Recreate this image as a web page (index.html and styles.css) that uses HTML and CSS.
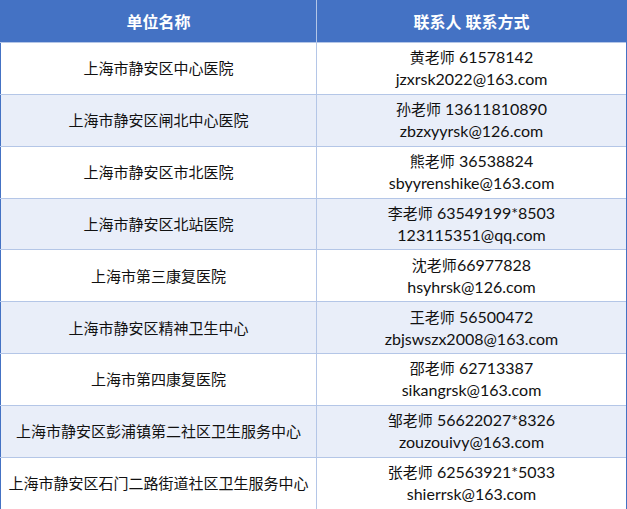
FILE: index.html
```html
<!DOCTYPE html>
<html lang="zh">
<head>
<meta charset="utf-8">
<link rel="stylesheet" href="styles.css">
</head>
<body>
<table class="contacts">
  <thead>
    <tr><th class="col-name">单位名称</th><th class="col-contact">联系人 联系方式</th></tr>
  </thead>
  <tbody>
    <tr><td>上海市静安区中心医院</td><td>黄老师<span class="lt"> 61578142</span><br><span class="lt">jzxrsk2022@163.com</span></td></tr>
    <tr class="alt"><td>上海市静安区闸北中心医院</td><td>孙老师<span class="lt"> 13611810890</span><br><span class="lt">zbzxyyrsk@126.com</span></td></tr>
    <tr><td>上海市静安区市北医院</td><td>熊老师<span class="lt"> 36538824</span><br><span class="lt">sbyyrenshike@163.com</span></td></tr>
    <tr class="alt"><td>上海市静安区北站医院</td><td>李老师<span class="lt"> 63549199*8503</span><br><span class="lt">123115351@qq.com</span></td></tr>
    <tr><td>上海市第三康复医院</td><td>沈老师<span class="lt">66977828</span><br><span class="lt">hsyhrsk@126.com</span></td></tr>
    <tr class="alt"><td>上海市静安区精神卫生中心</td><td>王老师<span class="lt"> 56500472</span><br><span class="lt">zbjswszx2008@163.com</span></td></tr>
    <tr><td>上海市第四康复医院</td><td>邵老师<span class="lt"> 62713387</span><br><span class="lt">sikangrsk@163.com</span></td></tr>
    <tr class="alt"><td>上海市静安区彭浦镇第二社区卫生服务中心</td><td>邹老师<span class="lt"> 56622027*8326</span><br><span class="lt">zouzouivy@163.com</span></td></tr>
    <tr><td>上海市静安区石门二路街道社区卫生服务中心</td><td>张老师<span class="lt"> 62563921*5033</span><br><span class="lt">shierrsk@163.com</span></td></tr>
  </tbody>
</table>
</body>
</html>
```
FILE: styles.css
```css
html, body {
  margin: 0;
  padding: 0;
  background: #ffffff;
}
.contacts {
  width: 627px;
  border-collapse: collapse;
  table-layout: fixed;
  font-family: "Lato", "Noto Sans CJK SC", sans-serif;
  color: #111111;
  border-left: 1px solid #4472c4;
  border-right: 1px solid #4472c4;
  border-bottom: 1px solid #4472c4;
}
.contacts th {
  background: #4472c4;
  color: #ffffff;
  font-weight: bold;
  font-size: 16px;
  height: 42px;
  padding: 0;
  text-align: center;
  vertical-align: middle;
}
.col-name {
  width: 315px;
  border-right: 1px solid #b4c6e7;
}
.contacts td {
  font-size: 15px;
  line-height: 22px;
  height: 50.85px;
  padding: 0;
  text-align: center;
  vertical-align: middle;
  border-top: 1px solid #b4c6e7;
  border-right: 1px solid #b4c6e7;
}
.contacts td:last-child {
  border-right: 1px solid #4472c4;
}
.lt {
  font-size: 16px;
}
.contacts tr.alt td {
  background: #e9eef9;
}
```
